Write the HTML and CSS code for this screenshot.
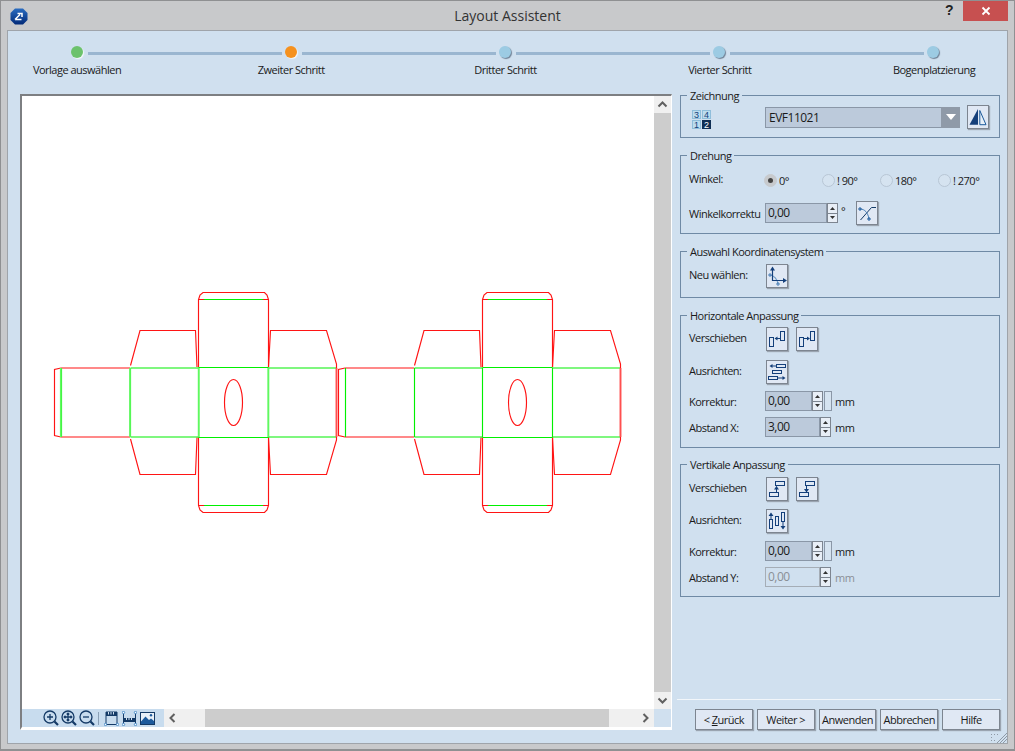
FILE: index.html
```html
<!DOCTYPE html>
<html lang="de">
<head>
<meta charset="utf-8">
<title>Layout Assistent</title>
<link rel="stylesheet" href="styles.css">
</head>
<body>
<div class="window">
  <header class="titlebar">
    <svg class="logo" width="18" height="17" viewBox="0 0 18 17"><defs><linearGradient id="lg" x1="0" y1="0" x2="0" y2="1"><stop offset="0" stop-color="#2a6cc0"/><stop offset="1" stop-color="#022a78"/></linearGradient></defs><path d="M5 .5h8l4.500 4.500v7l-4.500 4.500H5L.5 12V5z" fill="url(#lg)"/><path d="M5 11.500h6.500M5 11.500l5-5M7.500 5.500h4.500v3.500" fill="none" stroke="#fff" stroke-width="1.500"/></svg>
    <h1 class="title">Layout Assistent</h1>
    <span class="help">?</span>
    <span class="close"><svg width="10" height="10" viewBox="0 0 10 10"><path d="M1.500 1.500l7 7M8.500 1.500l-7 7" stroke="#fff" stroke-width="1.800"/></svg></span>
  </header>
  <div class="client">
    <div class="stepper">
      <div class="track">
        <span class="dot green"></span><span class="line"></span>
        <span class="dot orange"></span><span class="line"></span>
        <span class="dot blue"></span><span class="line"></span>
        <span class="dot blue"></span><span class="line"></span>
        <span class="dot blue"></span>
      </div>
      <div class="steps">
        <span>Vorlage auswählen</span>
        <span>Zweiter Schritt</span>
        <span>Dritter Schritt</span>
        <span>Vierter Schritt</span>
        <span>Bogenplatzierung</span>
      </div>
    </div>
    <div class="body">
      <section class="canvas">
        <div class="drawing">
          <svg class="dieline" width="632" height="613" viewBox="22 96 632 613">
            <defs>
              <g id="box" fill="none">
                <g stroke="#ff1414" stroke-width="1.150">
                  <path d="M130.500 365.500L140 330.500H195.500L197 367M268.500 367L270.500 330.500H326.500L336.500 364V368"/>
                  <path d="M130.500 439L140 474.500H195.500L197 437.500M268.500 437.500L270.500 474.500H326.500L336.500 440V437"/>
                  <path d="M198.500 367V299.500L200 295L203 292.500H264.500L267 295L268.500 299.500V367"/>
                  <path d="M198.500 437.500V505.500L200 510L203 512.500H264.500L267 510L268.500 505.500V437.500"/>
                  <path d="M198.500 299.500H204M263 299.500H268.500M198.500 505.500H204M263 505.500H268.500"/>
                  <ellipse cx="233.500" cy="402.500" rx="9" ry="23"/>
                  <path d="M61 368H130M61 437H130M61 368L54.500 369.500V435.500L61 437"/>
                  <path d="M336.500 368V437"/>
                </g>
                <g stroke="#00f000" stroke-width="1.150">
                  <path d="M130.500 368H198M130.500 437H198M269 368H336M269 437H336"/>
                  <path d="M198.500 367.500H268.500M198.500 437.500H268.500M130.500 368V437M198.500 367.500V437.500M268.500 367.500V437.500"/>
                  <path d="M204 299.500H263M204 505.500H263M61.500 368V437"/>
                </g>
              </g>
            </defs>
            <use href="#box"/>
            <use href="#box" x="284"/>
            <path d="M60.800 368V437M130 368V437M198.800 368V437M268.300 368V437" stroke="#60f860" stroke-width="1.800" fill="none"/>
            <path d="M336.500 368V437M620.500 368V437" stroke="#ff5050" stroke-width="1.800" fill="none"/>
          </svg>
        </div>
        <div class="vscroll">
          <svg class="arrow" width="17" height="17" viewBox="0 0 17 17"><path d="M4.500 10.500l4-4 4 4" fill="none" stroke="#606060" stroke-width="2"/></svg>
          <div class="vthumb"></div>
          <svg class="arrow" width="17" height="17" viewBox="0 0 17 17"><path d="M4.500 6.500l4 4 4-4" fill="none" stroke="#606060" stroke-width="2"/></svg>
        </div>
        <div class="toolbar">
          <svg width="18" height="18" viewBox="0 0 18 18"><g fill="none" stroke="#143a66" stroke-width="1.300"><circle cx="8" cy="8" r="6"/><path d="M5 8h6M8 5v6"/></g><path d="M12.500 12.500l3.500 3.500" stroke="#143a66" stroke-width="2.200"/></svg>
          <svg width="18" height="18" viewBox="0 0 18 18"><g fill="none" stroke="#143a66" stroke-width="1.300"><circle cx="8" cy="8" r="6"/><path d="M4.500 8h7M8 4.500v7M6.700 5.500L8 4.200l1.300 1.300M6.700 10.500L8 11.800l1.300-1.300M5.500 6.700L4.200 8l1.300 1.300M10.500 6.700L11.800 8l-1.300 1.300"/></g><path d="M12.500 12.500l3.500 3.500" stroke="#143a66" stroke-width="2.200"/></svg>
          <svg width="18" height="18" viewBox="0 0 18 18"><g fill="none" stroke="#143a66" stroke-width="1.300"><circle cx="8" cy="8" r="6"/><path d="M5 8h6"/></g><path d="M12.500 12.500l3.500 3.500" stroke="#143a66" stroke-width="2.200"/></svg>
          <span class="tsep"></span>
          <svg class="ti" width="15" height="15" viewBox="0 0 15 15"><path d="M2 13.500V1h11v12.500" fill="none" stroke="#143a66"/><path d="M2 1h11v4H2z" fill="#143a66"/><path d="M4.500 1v2.500M7 1v2.500M9.500 1v2.500" stroke="#d0e0ef"/><path d="M2 13.500h11" stroke="#143a66"/><circle cx="1.500" cy="13.500" r="1.200" fill="#fff" stroke="#2a78c0" stroke-width=".8"/><circle cx="13.500" cy="13.500" r="1.200" fill="#fff" stroke="#2a78c0" stroke-width=".8"/></svg>
          <svg class="ti" width="15" height="15" viewBox="0 0 15 15"><path d="M1.500 1.500V13.500M13.500 1.500V13.500" stroke="#143a66"/><path d="M2 7h11v4H2z" fill="#143a66"/><path d="M4.500 7v2M7 7v2M9.500 7v2" stroke="#d0e0ef"/><g fill="#fff" stroke="#2a78c0" stroke-width=".8"><circle cx="1.500" cy="1.500" r="1.200"/><circle cx="13.500" cy="1.500" r="1.200"/><circle cx="1.500" cy="13.500" r="1.200"/><circle cx="13.500" cy="13.500" r="1.200"/></g></svg>
          <svg class="ti" width="15" height="13" viewBox="0 0 15 13"><rect x=".5" y=".5" width="14" height="12" fill="#e8f0f8" stroke="#143a66"/><path d="M1 12V9.500L5.500 4.500 9 8l2-1.500 3 2.500V12z" fill="#1c5a9c"/><circle cx="11" cy="3.200" r="1.200" fill="#1c5a9c"/></svg>
        </div>
        <div class="hscroll">
          <svg class="arrow" width="17" height="18" viewBox="0 0 17 18"><path d="M10.500 5l-4 4 4 4" fill="none" stroke="#606060" stroke-width="2"/></svg>
          <div class="hthumb"></div>
          <svg class="arrow" width="17" height="18" viewBox="0 0 17 18"><path d="M6.500 5l4 4-4 4" fill="none" stroke="#606060" stroke-width="2"/></svg>
        </div>
        <div class="corner"></div>
      </section>

      <aside class="side">
        <fieldset class="group h50">
          <legend>Zeichnung</legend>
          <div class="row r24 mt2">
            <div class="numgrid"><span>3</span><span>4</span><span>1</span><span class="on">2</span></div>
            <div class="select"><span class="seltext">EVF11021</span><span class="selarrow"><svg width="10" height="6" viewBox="0 0 10 6"><path d="M0 0h10L5 6z" fill="#fff"/></svg></span></div>
            <button class="icon mirror" type="button"><svg width="22" height="24" viewBox="0 0 22 24"><path d="M2.500 19.700L11 4v15.700z" fill="#143f7a"/><path d="M12.800 5.500l6.200 14.200h-6.200z" fill="#e8f0f8" stroke="#1c5a9c"/></svg></button>
          </div>
        </fieldset>

        <fieldset class="group h86 gap10">
          <legend>Drehung</legend>
          <div class="row r20 mt7">
            <span class="lbl up2">Winkel:</span>
            <label class="radio first"><i class="circle on"></i>0°</label>
            <label class="radio"><i class="circle"></i>! 90°</label>
            <label class="radio"><i class="circle"></i>180°</label>
            <label class="radio"><i class="circle"></i>! 270°</label>
          </div>
          <div class="row r24 mt11">
            <span class="lbl">Winkelkorrektu</span>
            <div class="spin w62"><span class="val">0,00</span></div>
            <div class="spinbtns"><b class="sb"><svg width="5" height="3" viewBox="0 0 5 3"><path d="M2.500 0L5 3H0z"/></svg></b><b class="sb"><svg width="5" height="3" viewBox="0 0 5 3"><path d="M0 0h5L2.500 3z"/></svg></b></div>
            <span class="unit deg">°</span>
            <button class="icon ml-curve" type="button"><svg width="22" height="24" viewBox="0 0 22 24"><path d="M4.500 19L15.500 6.500H20" fill="none" stroke="#143a66"/><path d="M4 8c5 0 8 4 9 10" fill="none" stroke="#4a7fb5"/><path d="M2 8h4M4 6v4M11 18h4M13 16v4" stroke="#1c5a9c"/></svg></button>
          </div>
        </fieldset>

        <fieldset class="group h54 gap10">
          <legend>Auswahl Koordinatensystem</legend>
          <div class="row r24 mt5">
            <span class="lbl up2">Neu wählen:</span>
            <button class="icon nudge" type="button"><svg width="22" height="24" viewBox="0 0 22 24"><path d="M3.500 11c4 0 8 4 8.500 9" fill="none" stroke="#6f9ac6" stroke-width="1.200"/><path d="M2 11h4M4 9v4M10 20h4M12 18v4" stroke="#4a7fb5"/><path d="M6.500 5V16.500H19" fill="none" stroke="#143f7a" stroke-width="1.200"/><path d="M6.500 2.500l2.500 4H4zM21 16.500l-4 2.500v-5z" fill="#143f7a"/></svg></button>
          </div>
        </fieldset>

        <fieldset class="group h140 gap10">
          <legend>Horizontale Anpassung</legend>
          <div class="row r24 mt4">
            <span class="lbl up2">Verschieben</span>
            <button class="icon nudge" type="button"><svg width="22" height="24" viewBox="0 0 22 24"><g fill="none" stroke="#143f7a"><rect x="3.500" y="10.500" width="4" height="9"/><rect x="14.500" y="4.500" width="4" height="9"/></g><path d="M9 11.500h5" stroke="#143f7a"/><path d="M8.500 11.500l3-2v4z" fill="#143f7a"/></svg></button>
            <button class="icon" type="button"><svg width="22" height="24" viewBox="0 0 22 24"><g fill="none" stroke="#143f7a"><rect x="3.500" y="10.500" width="4" height="9"/><rect x="14.500" y="4.500" width="4" height="9"/></g><path d="M8 11.500h5" stroke="#143f7a"/><path d="M14 11.500l-3-2v4z" fill="#143f7a"/></svg></button>
          </div>
          <div class="row r24 mt9">
            <span class="lbl up2">Ausrichten:</span>
            <button class="icon nudge" type="button"><svg width="22" height="24" viewBox="0 0 22 24"><g fill="none" stroke="#143f7a"><rect x="10.500" y="4.500" width="9" height="3"/><rect x="6.500" y="10.500" width="9" height="3"/><rect x="2.500" y="16.500" width="9" height="3"/></g><path d="M5 6h5M12 18h5" stroke="#143f7a"/><path d="M3.500 6l3-2v4zM19.500 18l-3-2v4z" fill="#143f7a"/></svg></button>
          </div>
          <div class="row r20 mt7">
            <span class="lbl">Korrektur:</span>
            <div class="spin w47"><span class="val">0,00</span></div>
            <div class="spinbtns"><b class="sb"><svg width="5" height="3" viewBox="0 0 5 3"><path d="M2.500 0L5 3H0z"/></svg></b><b class="sb"><svg width="5" height="3" viewBox="0 0 5 3"><path d="M0 0h5L2.500 3z"/></svg></b></div>
            <span class="stub"></span>
            <span class="unit">mm</span>
          </div>
          <div class="row r20 mt6">
            <span class="lbl">Abstand X:</span>
            <div class="spin w55"><span class="val">3,00</span></div>
            <div class="spinbtns"><b class="sb"><svg width="5" height="3" viewBox="0 0 5 3"><path d="M2.500 0L5 3H0z"/></svg></b><b class="sb"><svg width="5" height="3" viewBox="0 0 5 3"><path d="M0 0h5L2.500 3z"/></svg></b></div>
            <span class="unit u4">mm</span>
          </div>
        </fieldset>

        <fieldset class="group h140 gap9">
          <legend>Vertikale Anpassung</legend>
          <div class="row r24 mt5">
            <span class="lbl up2">Verschieben</span>
            <button class="icon nudge" type="button"><svg width="22" height="24" viewBox="0 0 22 24"><g fill="none" stroke="#143f7a"><rect x="9.500" y="4.500" width="9" height="4"/><rect x="3.500" y="15.500" width="9" height="4"/></g><path d="M10.500 9.500v6" stroke="#143f7a"/><path d="M10.500 9l-2.500 3.500h5z" fill="#143f7a"/></svg></button>
            <button class="icon" type="button"><svg width="22" height="24" viewBox="0 0 22 24"><g fill="none" stroke="#143f7a"><rect x="9.500" y="4.500" width="9" height="4"/><rect x="3.500" y="15.500" width="9" height="4"/></g><path d="M10.500 9v6" stroke="#143f7a"/><path d="M10.500 15.500l-2.500-3.500h5z" fill="#143f7a"/></svg></button>
          </div>
          <div class="row r24 mt8">
            <span class="lbl up2">Ausrichten:</span>
            <button class="icon nudge" type="button"><svg width="22" height="24" viewBox="0 0 22 24"><g fill="none" stroke="#143f7a"><rect x="3.500" y="10.500" width="3" height="9"/><rect x="9.500" y="7.500" width="3" height="9"/><rect x="15.500" y="3.500" width="3" height="9"/></g><path d="M5 5v5M17 13v5" stroke="#143f7a"/><path d="M5 3.500l2.500 3.500h-5zM17 20.500l-2.500-3.500h5z" fill="#143f7a"/></svg></button>
          </div>
          <div class="row r20 mt8">
            <span class="lbl">Korrektur:</span>
            <div class="spin w47"><span class="val">0,00</span></div>
            <div class="spinbtns"><b class="sb"><svg width="5" height="3" viewBox="0 0 5 3"><path d="M2.500 0L5 3H0z"/></svg></b><b class="sb"><svg width="5" height="3" viewBox="0 0 5 3"><path d="M0 0h5L2.500 3z"/></svg></b></div>
            <span class="stub"></span>
            <span class="unit">mm</span>
          </div>
          <div class="row r20 mt6">
            <span class="lbl">Abstand Y:</span>
            <div class="spin w55 off"><span class="val">0,00</span></div>
            <div class="spinbtns"><b class="sb"><svg width="5" height="3" viewBox="0 0 5 3"><path d="M2.500 0L5 3H0z"/></svg></b><b class="sb"><svg width="5" height="3" viewBox="0 0 5 3"><path d="M0 0h5L2.500 3z"/></svg></b></div>
            <span class="unit u4 dim">mm</span>
          </div>
        </fieldset>

        <div class="footer">
          <hr class="rule">
          <div class="actions">
            <button class="btn" type="button">&lt; <u>Z</u>urück</button>
            <button class="btn" type="button">Weiter &gt;</button>
            <button class="btn" type="button">Anwenden</button>
            <button class="btn" type="button">Abbrechen</button>
            <button class="btn" type="button">Hilfe</button>
          </div>
        </div>
      </aside>
    </div>
    <svg class="grip" width="17" height="12" viewBox="0 0 17 12"><g fill="#8f9aa6"><rect x="1" y="3" width="1" height="1"/><rect x="4" y="3" width="1" height="1"/><rect x="7" y="3" width="1" height="1"/><rect x="1" y="6" width="1" height="1"/><rect x="1" y="9" width="1" height="1"/><rect x="4" y="9" width="1" height="1"/></g><path d="M7 12L17 2M10 12l7-7M13 12l4-4" stroke="#8f9aa6"/></svg>
  </div>
</div>
</body>
</html>
```

FILE: styles.css
```css
* { box-sizing: border-box; }
html, body { margin: 0; padding: 0; }
body {
  width: 1015px;
  height: 751px;
  overflow: hidden;
  background: #c8c9cb;
  font-family: "Open Sans", "Liberation Sans", sans-serif;
  font-size: 11px;
  letter-spacing: -0.5px;
  color: #1a1a1a;
}
.window {
  width: 1015px;
  height: 751px;
  display: flex;
  flex-direction: column;
  background: #c8c9cb;
  border-top: 1px solid #8f9092;
  border-left: 1px solid #8f9092;
  border-right: 1px solid #8f9092;
  border-bottom: 2px solid #8f9092;
}
.titlebar {
  height: 29px;
  flex: none;
  position: relative;
  display: flex;
  justify-content: center;
}
.title {
  margin: 6px 0 0;
  font-size: 14px;
  line-height: 17px;
  font-weight: 400;
  letter-spacing: 0;
  color: #333;
}
.logo { position: absolute; left: 9px; top: 7px; }
.help {
  position: absolute;
  left: 944px;
  top: 2px;
  font: bold 14px/15px "Liberation Sans", sans-serif;
  letter-spacing: 0;
  color: #222;
}
.close {
  position: absolute;
  left: 962px;
  top: 0;
  width: 45px;
  height: 20px;
  background: #c75050;
  display: flex;
  align-items: center;
  justify-content: center;
}
.client {
  flex: 1;
  margin: 0 6px 5px;
  min-height: 0;
  position: relative;
  display: flex;
  flex-direction: column;
  background: #d0e0ef;
  border: 1px solid #9fa4aa;
}
.stepper { height: 57px; flex: none; }
.track {
  display: flex;
  align-items: center;
  padding: 15px 0 0 63px;
  width: 931px;
}
.dot {
  width: 12px;
  height: 12px;
  flex: none;
  border-radius: 50%;
  box-shadow: 1px 1px 1px #f4f8fb;
}
.green { background: #6cc26c; }
.orange { background: #f5911e; }
.blue { background: #9ccbe3; box-shadow: 1px 1px 1px #6f8296; }
.line {
  flex: 1;
  height: 3px;
  margin: 2px 3px 0 5px;
  background: #9ab6d0;
}
.steps {
  display: flex;
  justify-content: space-between;
  padding: 4px 13px 0 9px;
  line-height: 16px;
}
.steps span { width: 120px; text-align: center; white-space: nowrap; }
.body {
  flex: 1;
  min-height: 0;
  display: flex;
  gap: 8px;
  padding: 0 6px 13px 12px;
}
.canvas {
  width: 652px;
  margin-top: 6px;
  display: grid;
  grid-template-columns: 142px 490px 17px;
  grid-template-rows: 1fr 18px;
  background: #fff;
  border-top: 2px solid #7d7f82;
  border-left: 2px solid #7d7f82;
  border-right: 1px solid #fff;
  border-bottom: 3px solid #fff;
}
.drawing { grid-column: 1 / 3; grid-row: 1; min-width: 0; min-height: 0; overflow: hidden; }
.dieline { display: block; }
.vscroll {
  grid-column: 3;
  grid-row: 1;
  display: flex;
  flex-direction: column;
  background: #f0f0f0;
}
.arrow { display: block; flex: none; }
.vthumb { flex: 1; background: #cdcdcd; }
.toolbar {
  grid-column: 1;
  grid-row: 2;
  display: flex;
  align-items: center;
  padding-left: 20px;
  background: #c8dcee;
}
.ti { margin-right: 3px; }
.hscroll {
  grid-column: 2;
  grid-row: 2;
  display: flex;
  background: #f0f0f0;
}
.hthumb { width: 404px; margin: 0 auto 0 24px; background: #cdcdcd; }
.corner { grid-column: 3; grid-row: 2; background: #d0e0ef; }
.tsep { width: 1px; height: 13px; margin: 0 5px 0 2px; background: #8aa0b6; }
.side {
  width: 320px;
  display: flex;
  flex-direction: column;
}
.group {
  margin: 0;
  padding: 0 8px;
  border: 1px solid #6f8aa5;
  min-width: 0;
}
.group legend {
  margin-left: -2px;
  padding: 1px 3px 0;
  line-height: 14px;
  font-size: 11px;
}
.h50 { height: 50px; }
.h86 { height: 86px; }
.h54 { height: 54px; }
.h140 { height: 140px; }
.gap10 { margin-top: 10px; }
.gap9 { margin-top: 9px; }
.row { display: flex; align-items: center; }
.r24 { height: 24px; }
.r20 { height: 20px; }
.mt2 { margin-top: 2px; }
.mt4 { margin-top: 4px; }
.mt5 { margin-top: 5px; }
.mt6 { margin-top: 6px; }
.mt7 { margin-top: 7px; }
.mt8 { margin-top: 8px; }
.mt9 { margin-top: 9px; }
.mt11 { margin-top: 11px; }
.lbl {
  width: 68px;
  margin-right: 8px;
  flex: none;
  white-space: nowrap;
}
.up2 { margin-bottom: 3px; }
.numgrid {
  display: grid;
  grid-template-columns: 9px 9px;
  grid-auto-rows: 9px;
  gap: 1px;
  margin: 5px 53px 0 3px;
  width: 20px;
}
.numgrid span {
  display: flex;
  align-items: center;
  justify-content: center;
  background: #bcdcee;
  border: 1px solid #8fbedb;
  color: #143f7a;
  font: 9px/8px "Liberation Sans", sans-serif;
  letter-spacing: 0;
}
.numgrid .on { background: #0f2f55; border-color: #0f2f55; color: #fff; }
.select {
  width: 195px;
  height: 21px;
  display: flex;
  background: #bccadb;
  border: 1px solid #8a97a7;
}
.seltext { flex: 1; padding-left: 3px; line-height: 19px; font-size: 12px; }
.selarrow {
  width: 19px;
  display: flex;
  align-items: center;
  justify-content: center;
  margin: -1px -1px -1px 0;
  background: #8f9aa8;
}
button { font: inherit; color: inherit; letter-spacing: inherit; padding: 0; cursor: default; }
.icon {
  width: 22px;
  height: 24px;
  flex: none;
  background: #e0e8f4;
  border: 1px solid #7d8590;
  box-shadow: 1px 1px 1px #9aa4b0;
  margin-right: 8px;
  position: relative;
}
.icon svg { position: absolute; left: -1px; top: -1px; }
.mirror { margin: 0 0 0 7px; }
.nudge { margin-left: 1px; }
.ml-curve { margin: 0 0 0 8px; }
.radio {
  display: flex;
  align-items: center;
  width: 58px;
  flex: none;
}
.radio.first { margin-left: -1px; }
.circle {
  width: 13px;
  height: 13px;
  margin-right: 2px;
  border-radius: 50%;
  border: 1px solid #b8c6d5;
  background: #d5e3f0;
  position: relative;
}
.circle.on { background: #c7cacd; border-color: #c7cacd; }
.circle.on::after {
  content: "";
  position: absolute;
  left: 3px;
  top: 3px;
  width: 5px;
  height: 5px;
  border-radius: 50%;
  background: #444;
}
.spin {
  height: 20px;
  flex: none;
  background: #bccadb;
  border: 1px solid #8a97a7;
  padding-left: 2px;
  line-height: 18px;
}
.val { font-size: 12px; }
.w62 { width: 62px; }
.w47 { width: 47px; }
.w55 { width: 55px; }
.spin.off { background: #d0e0ef; border-color: #a5adb6; color: #8a8f96; }
.spinbtns {
  width: 11px;
  height: 20px;
  flex: none;
  display: flex;
  flex-direction: column;
}
.sb {
  flex: 1;
  display: flex;
  align-items: center;
  justify-content: center;
  background: #e8eef6;
  border: 1px solid #7d8590;
}
.sb + .sb { border-top: 0; }
.sb svg { fill: #333; display: block; }
.unit { margin-left: 3px; }
.u4 { margin-left: 4px; }
.deg { width: 7px; margin: -6px 0 0 3px; }
.dim { color: #8a8f96; }
.stub {
  width: 8px;
  height: 20px;
  margin-left: 1px;
  flex: none;
  background: #d5e3f0;
  border: 1px solid #8a97a7;
}
.footer { margin-top: auto; }
.rule {
  display: block;
  margin: 0 -1px 9px -3px;
  height: 1px;
  border: 0;
  background: #f2f6fa;
}
.actions { display: flex; gap: 4px; padding-left: 15px; }
.btn {
  width: 58px;
  height: 21px;
  background: #e0e8f4;
  border: 1px solid #7d8590;
  box-shadow: 1px 1px 1px #9aa4b0;
  line-height: 18px;
  white-space: nowrap;
  overflow: hidden;
}
.grip { position: absolute; right: 0; bottom: 0; }
```
